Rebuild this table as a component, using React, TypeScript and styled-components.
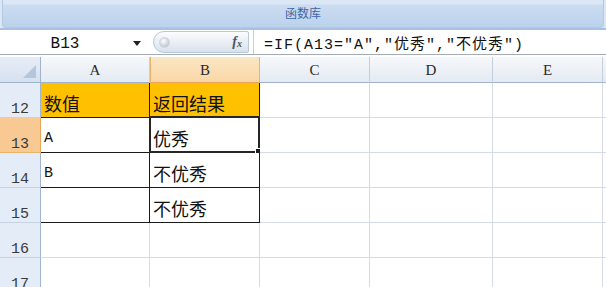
import styled, { createGlobalStyle, css } from "styled-components";

const GlobalStyle = createGlobalStyle`
  html, body {
    margin: 0;
    padding: 0;
    background: #ffffff;
    overflow: hidden;
  }
  body {
    font-family: "Noto Sans CJK SC", sans-serif;
  }
`;

const CJK = `"Noto Sans CJK SC", "Noto Sans", sans-serif`;
const SERIF = `"Liberation Serif", "Noto Sans CJK SC", serif`;
const MONO = `"Liberation Mono", "Noto Sans CJK SC", monospace`;

const Page = styled.div`
  width: 606px;
  height: 287px;
  overflow: hidden;
  display: flex;
  flex-direction: column;
`;

const Ribbon = styled.div`
  height: 32px;
  background: #dce7f4;
  padding: 0 2px;
  border-bottom: 2px solid #a6c1e1;
  display: flex;
  flex-direction: column;
`;

const Group = styled.div`
  height: 28px;
  border: 1px solid #b3c9e3;
  border-top: none;
  border-radius: 0 0 4px 4px;
  box-sizing: border-box;
  background: linear-gradient(#dbe7f4 0, #dbe7f4 4px, #cbdcf1 5px, #bcd2ec 100%);
  display: flex;
  align-items: flex-end;
  justify-content: center;
  padding-bottom: 8px;
`;

const GroupLabel = styled.span`
  font-family: ${CJK};
  font-size: 12px;
  line-height: 1;
  color: #3d66a6;
`;

const FormulaBar = styled.div`
  height: 25px;
  display: flex;
  align-items: center;
  background: #ffffff;
  border-bottom: 1px solid #a3abb6;
`;

const NameBox = styled.div`
  width: 130px;
  display: flex;
  justify-content: center;
  font-family: ${MONO};
  font-size: 16px;
  color: #111;
  padding-top: 3px;
`;

const DropArrow = styled.div`
  width: 0;
  height: 0;
  border-left: 4px solid transparent;
  border-right: 4px solid transparent;
  border-top: 5px solid #222;
  margin: 2px 12px 0 3px;
`;

const Pill = styled.div`
  width: 96px;
  height: 22px;
  box-sizing: border-box;
  border: 1px solid #b7c7da;
  border-radius: 11px 2px 2px 11px;
  background: linear-gradient(#fbfcfe, #e6ecf3 60%, #d9e1eb);
  display: flex;
  align-items: center;
  justify-content: space-between;
  padding: 0 6px 0 5px;
`;

const Knob = styled.div`
  width: 9px;
  height: 9px;
  border-radius: 50%;
  background: radial-gradient(circle at 40% 35%, #ffffff, #c3cbd5 70%);
  border: 1px solid #cdd5df;
`;

const Fx = styled.span`
  font-family: ${SERIF};
  font-style: italic;
  font-weight: bold;
  font-size: 14px;
  color: #4a5566;
  sub {
    font-size: 10px;
    vertical-align: -1px;
  }
`;

const Divider = styled.div`
  width: 1px;
  height: 24px;
  background: #c7cfd9;
  margin: 0 10px 0 4px;
`;

const Formula = styled.div`
  font-family: ${MONO};
  font-size: 15px;
  letter-spacing: 1px;
  color: #111;
  white-space: nowrap;
  padding-top: 2px;
`;

const Sheet = styled.div`
  margin-top: 2px;
  display: grid;
  grid-template-columns: 41px 109px 110px 110px 123px 110px 1fr;
  grid-template-rows: 26px repeat(6, 35px);
`;

const Corner = styled.div`
  box-sizing: border-box;
  background: linear-gradient(#e6edf7, #d6e1ef);
  border-right: 1px solid #9fb5cd;
  border-bottom: 1px solid #9fb5cd;
  display: flex;
  align-items: flex-end;
  justify-content: flex-end;
  padding: 0 4px 4px 0;
`;

const CornerTri = styled.div`
  width: 0;
  height: 0;
  border-left: 13px solid transparent;
  border-bottom: 13px solid #b4c6dc;
`;

const ColHead = styled.div<{ $sel?: boolean }>`
  box-sizing: border-box;
  display: flex;
  align-items: center;
  justify-content: center;
  font-family: ${SERIF};
  font-size: 15px;
  color: #2a2a2a;
  padding-top: 2px;
  background: linear-gradient(#f6f8fb, #e4eaf2);
  border-right: 1px solid #c4cfdc;
  border-bottom: 1px solid #9fb5cd;
  ${(p) =>
    p.$sel &&
    css`
      background: linear-gradient(#fbe6c4, #f9d7a6);
      border-right-color: #eeb36a;
      border-bottom-color: #eaa458;
      border-left: 1px solid #eeb36a;
    `}
`;

const RowHead = styled.div<{ $sel?: boolean }>`
  box-sizing: border-box;
  display: flex;
  align-items: flex-end;
  justify-content: center;
  padding-bottom: 0;
  font-family: ${MONO};
  font-size: 15px;
  line-height: 1;
  color: #3a3a3a;
  background: ${(p) => (p.$sel ? "#f8c993" : "#e4ecf7")};
  border-right: 1px solid ${(p) => (p.$sel ? "#eaa458" : "#9fb5cd")};
  border-bottom: 1px solid ${(p) => (p.$sel ? "#eeb36a" : "#c6d3e3")};
`;

const Cell = styled.div<{ $fill?: string; $ink?: boolean; $mono?: boolean }>`
  position: relative;
  box-sizing: border-box;
  display: flex;
  align-items: flex-end;
  padding: 0 0 ${(p) => (p.$mono ? "6px" : "5px")} 3px;
  font-family: ${(p) => (p.$mono ? MONO : CJK)};
  font-size: ${(p) => (p.$mono ? "15px" : "18px")};
  line-height: 1;
  color: #111;
  background: ${(p) => p.$fill ?? "#ffffff"};
  border-right: 1px solid ${(p) => (p.$ink ? "#1b1b1b" : "#d5dbe6")};
  border-bottom: 1px solid ${(p) => (p.$ink ? "#1b1b1b" : "#d5dbe6")};
`;

const ActiveFrame = styled.div`
  position: absolute;
  left: -1px;
  top: -2px;
  right: -1px;
  bottom: -1px;
  border: 2px solid #262626;
  pointer-events: none;
`;

const FillHandle = styled.div`
  position: absolute;
  right: -4px;
  bottom: -4px;
  width: 5px;
  height: 5px;
  background: #1b1b1b;
  border: 1px solid #ffffff;
`;

const cols = ["A", "B", "C", "D", "E"];

type Row = { n: number; a?: string; b?: string; head?: boolean; table: boolean };

const rows: Row[] = [
  { n: 12, a: "数值", b: "返回结果", head: true, table: true },
  { n: 13, a: "A", b: "优秀", table: true },
  { n: 14, a: "B", b: "不优秀", table: true },
  { n: 15, b: "不优秀", table: true },
  { n: 16, table: false },
  { n: 17, table: false },
];

export default function App() {
  return (
    <Page>
      <GlobalStyle />
      <Ribbon>
        <Group>
          <GroupLabel>函数库</GroupLabel>
        </Group>
      </Ribbon>
      <FormulaBar>
        <NameBox>B13</NameBox>
        <DropArrow />
        <Pill>
          <Knob />
          <Fx>
            f<sub>x</sub>
          </Fx>
        </Pill>
        <Divider />
        <Formula>=IF(A13="A","优秀","不优秀")</Formula>
      </FormulaBar>
      <Sheet>
        <Corner>
          <CornerTri />
        </Corner>
        {cols.map((c) => (
          <ColHead key={c} $sel={c === "B"}>
            {c}
          </ColHead>
        ))}
        <ColHead />
        {rows.map((r) => {
          const fill = r.head ? "#ffc000" : undefined;
          return [
            <RowHead key={`h${r.n}`} $sel={r.n === 13}>
              {r.n}
            </RowHead>,
            <Cell key={`a${r.n}`} $fill={fill} $ink={r.table} $mono={r.a?.length === 1}>
              {r.a}
            </Cell>,
            <Cell key={`b${r.n}`} $fill={fill} $ink={r.table}>
              {r.b}
              {r.n === 13 && (
                <ActiveFrame>
                  <FillHandle />
                </ActiveFrame>
              )}
            </Cell>,
            <Cell key={`c${r.n}`} />,
            <Cell key={`d${r.n}`} />,
            <Cell key={`e${r.n}`} />,
            <Cell key={`f${r.n}`} />,
          ];
        })}
      </Sheet>
    </Page>
  );
}
